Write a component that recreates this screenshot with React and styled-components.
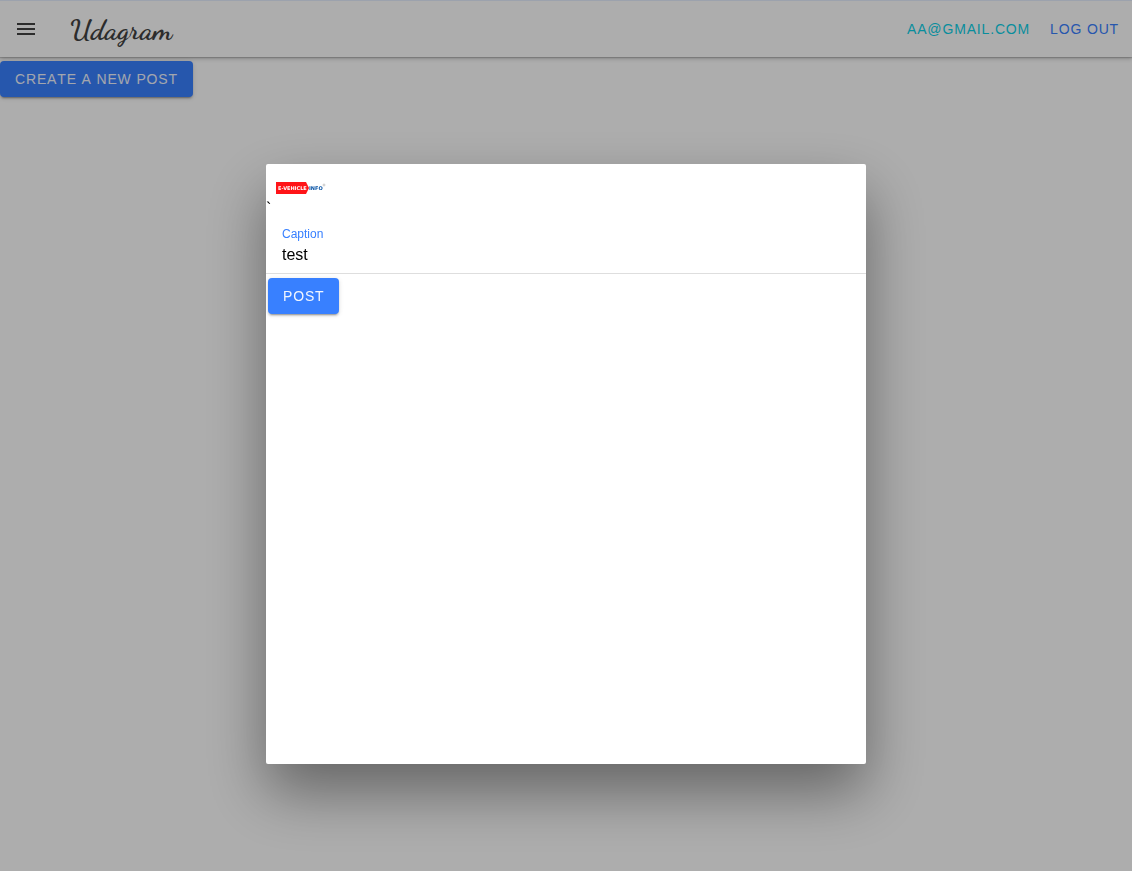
import React, { useState } from "react";
import styled, { createGlobalStyle } from "styled-components";

const GlobalStyle = createGlobalStyle`
  *, *::before, *::after { box-sizing: border-box; }
  body {
    margin: 0;
    background: #fff;
    color: #000;
    font-family: "Liberation Sans", Arial, sans-serif;
    font-size: 16px;
  }
`;

const Page = styled.div`
  min-height: 100vh;
`;

const Header = styled.header`
  display: flex;
  align-items: center;
  height: 57px;
  padding: 0 8px;
  border-top: 1px solid #e6efff;
  background: #fff;
  box-shadow: 0 1px 1px rgba(0, 0, 0, 0.16), 0 2px 4px rgba(0, 0, 0, 0.2);
`;

const MenuButton = styled.button`
  display: flex;
  padding: 9px;
  border: 0;
  background: none;
  color: #424242;
  cursor: pointer;
`;

const Brand = styled.a`
  margin-left: 26px;
  color: #424242;
  font: 700 29px "Dancing Script", cursive;
  text-decoration: none;
`;

const Account = styled.nav`
  display: flex;
  gap: 4px;
  margin-left: auto;
`;

const Button = styled.button`
  height: 36px;
  padding: 0 15px;
  border: 0;
  border-radius: 4px;
  background: #3880ff;
  color: #f0f5ff;
  font: 14px "Liberation Sans", Arial, sans-serif;
  font-kerning: none;
  letter-spacing: 0.06em;
  text-transform: uppercase;
  box-shadow: 0 3px 1px -2px rgba(0, 0, 0, 0.2), 0 2px 2px rgba(0, 0, 0, 0.14),
    0 1px 5px rgba(0, 0, 0, 0.12);
  cursor: pointer;
`;

const ClearButton = styled(Button)`
  padding: 0 8px;
  background: none;
  color: ${({ $tone }) => ($tone === "secondary" ? "#0cd1e8" : "#3880ff")};
  box-shadow: none;
`;

const ClearBlue = styled(ClearButton)`
  padding-right: 5px;
`;

const Main = styled.main`
  padding-top: 4px;
`;

const Backdrop = styled.div`
  position: fixed;
  inset: 0;
  display: flex;
  align-items: center;
  justify-content: center;
  padding-top: 57px;
  background: rgba(0, 0, 0, 0.32);
`;

const Modal = styled.form`
  width: min(600px, 100%);
  height: min(600px, 100%);
  overflow: hidden;
  border-radius: 2px;
  background: #fff;
  box-shadow: 0 28px 60px rgba(0, 0, 0, 0.42);
`;

const Preview = styled.div`
  height: 54px;
`;

const Thumbnail = styled.svg`
  width: 50px;
  height: 50px;
`;

const Field = styled.label`
  display: flex;
  flex-direction: column;
  height: 56px;
  padding: 9px 16px 0;
  border-bottom: 1px solid #dedede;
  color: #3880ff;
  font-size: 12px;
  line-height: 14px;
`;

const CaptionInput = styled.input`
  width: 100%;
  height: 20px;
  margin-top: 4px;
  padding: 0;
  border: 0;
  outline: 0;
  background: none;
  color: #000;
  font: 16px "Liberation Sans", Arial, sans-serif;
`;

const Actions = styled.div`
  padding: 4px 2px;
`;

function MenuIcon() {
  return (
    <svg width="18" height="18" viewBox="0 0 18 18" fill="currentColor" aria-hidden="true">
      <path d="M0 3h18v2H0zM0 8h18v2H0zM0 13h18v2H0z" />
    </svg>
  );
}

function PostImage() {
  return (
    <Thumbnail viewBox="0 0 50 50" role="img" aria-label="E-Vehicle Info">
      <path d="M0 18h30l2 4 1 2-1 2-2 4H0z" fill="#ff1418" />
      <g fontFamily="DejaVu Sans, sans-serif" fontSize="5" fontWeight="700">
        <text x="2" y="26" fill="#fff">E-VEHICLE</text>
        <text x="33" y="26" fill="#0753a6">INFO</text>
      </g>
      <circle cx="48" cy="21" r="1" fill="none" stroke="#9a9a9a" strokeWidth="0.5" />
    </Thumbnail>
  );
}

export default function App() {
  const [caption, setCaption] = useState("test");
  return (
    <Page>
      <GlobalStyle />
      <Header>
        <MenuButton type="button" aria-label="Menu"><MenuIcon /></MenuButton>
        <Brand href="#home">Udagram</Brand>
        <Account>
          <ClearButton type="button" $tone="secondary">aa@gmail.com</ClearButton>
          <ClearBlue type="button">Log Out</ClearBlue>
        </Account>
      </Header>
      <Main>
        <Button type="button">Create a New Post</Button>
      </Main>
      <Backdrop>
        <Modal role="dialog" aria-label="New post" onSubmit={(e) => e.preventDefault()}>
          <Preview>
            {"` "}
            <PostImage />
          </Preview>
          <Field>
            Caption
            <CaptionInput value={caption} onChange={(e) => setCaption(e.target.value)} />
          </Field>
          <Actions>
            <Button type="submit">Post</Button>
          </Actions>
        </Modal>
      </Backdrop>
    </Page>
  );
}
